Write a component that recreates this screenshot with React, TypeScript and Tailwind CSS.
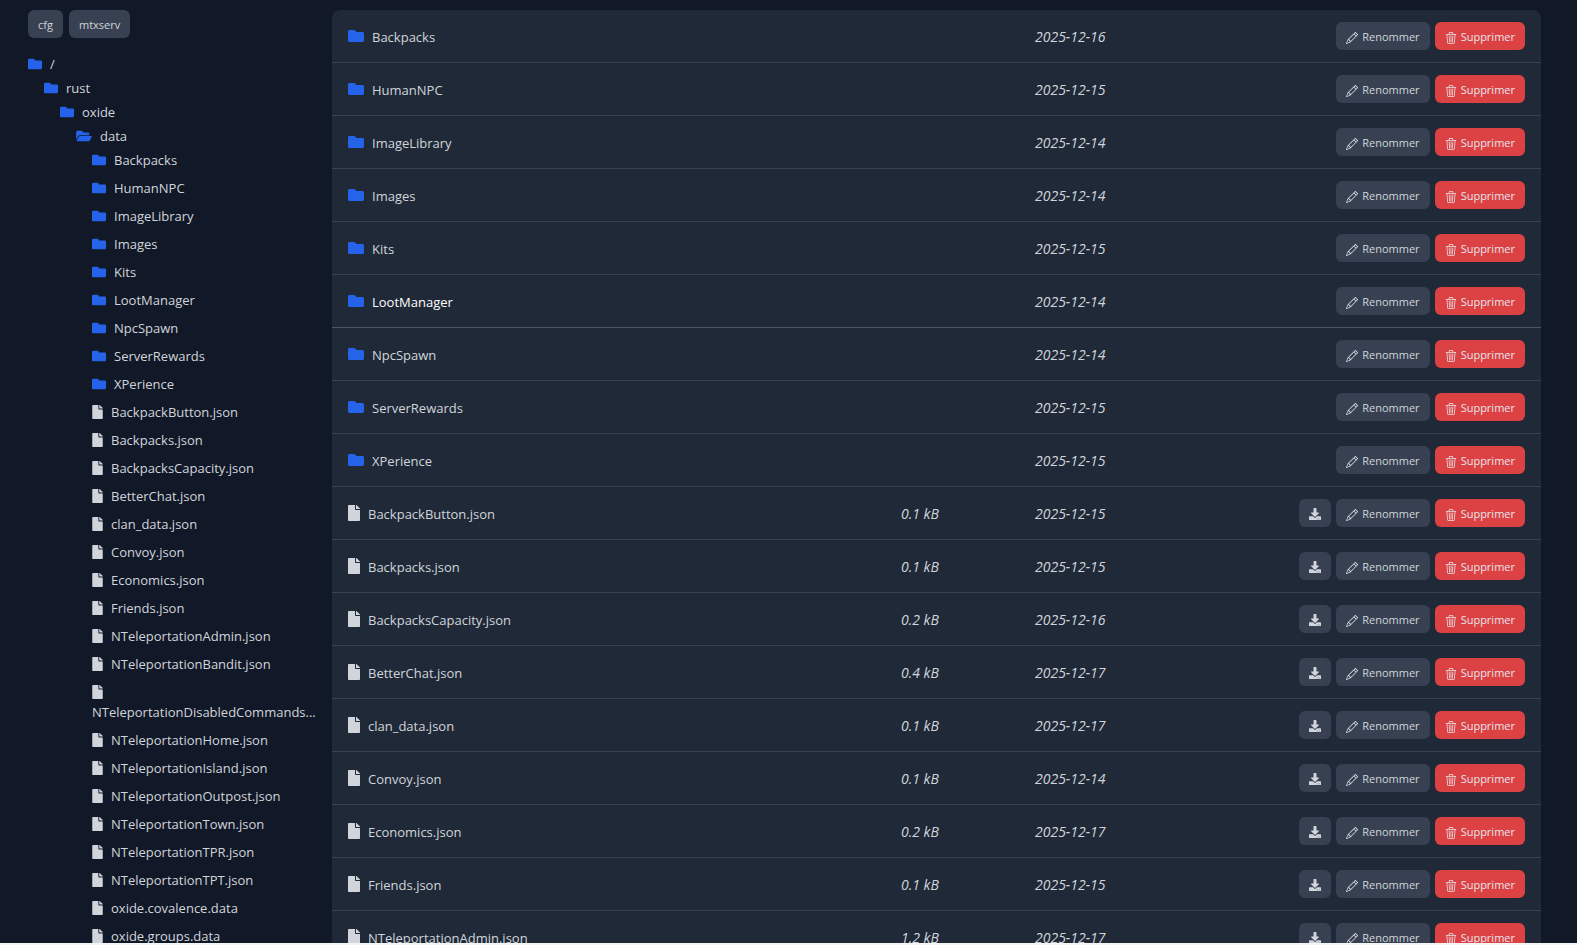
import { BsPencil, BsTrash3 } from "react-icons/bs";
import { FaDownload, FaFile, FaFolder, FaFolderOpen } from "react-icons/fa";

type Entry = {
  name: string;
  date: string;
  size?: string;
  active?: boolean;
};

const shortcuts = ["cfg", "mtxserv"];

const parents = [
  { name: "/", indent: "pl-0" },
  { name: "rust", indent: "pl-4" },
  { name: "oxide", indent: "pl-8" },
  { name: "data", indent: "pl-12", open: true },
];

const folders: Entry[] = [
  { name: "Backpacks", date: "2025-12-16" },
  { name: "HumanNPC", date: "2025-12-15" },
  { name: "ImageLibrary", date: "2025-12-14" },
  { name: "Images", date: "2025-12-14" },
  { name: "Kits", date: "2025-12-15" },
  { name: "LootManager", date: "2025-12-14", active: true },
  { name: "NpcSpawn", date: "2025-12-14" },
  { name: "ServerRewards", date: "2025-12-15" },
  { name: "XPerience", date: "2025-12-15" },
];

const files: Entry[] = [
  { name: "BackpackButton.json", size: "0.1 kB", date: "2025-12-15" },
  { name: "Backpacks.json", size: "0.1 kB", date: "2025-12-15" },
  { name: "BackpacksCapacity.json", size: "0.2 kB", date: "2025-12-16" },
  { name: "BetterChat.json", size: "0.4 kB", date: "2025-12-17" },
  { name: "clan_data.json", size: "0.1 kB", date: "2025-12-17" },
  { name: "Convoy.json", size: "0.1 kB", date: "2025-12-14" },
  { name: "Economics.json", size: "0.2 kB", date: "2025-12-17" },
  { name: "Friends.json", size: "0.1 kB", date: "2025-12-15" },
  { name: "NTeleportationAdmin.json", size: "1.2 kB", date: "2025-12-17" },
];

const treeFiles = [
  ...files.map((file) => file.name),
  "NTeleportationBandit.json",
  "NTeleportationDisabledCommands...",
  "NTeleportationHome.json",
  "NTeleportationIsland.json",
  "NTeleportationOutpost.json",
  "NTeleportationTown.json",
  "NTeleportationTPR.json",
  "NTeleportationTPT.json",
  "oxide.covalence.data",
  "oxide.groups.data",
];

const buttonBase =
  "inline-flex h-7 items-center gap-1 rounded-md px-[10px] pt-0.5 text-[11px]";
const grayButton = `${buttonBase} bg-[#374151] text-[#d1d5db]`;
const redButton = `${buttonBase} bg-[#dc4143] text-[#e5e7eb]`;

function Sidebar() {
  return (
    <aside className="w-[332px] shrink-0 pl-7 pt-[10px]">
      <div className="flex gap-[6px]">
        {shortcuts.map((name) => (
          <button key={name} type="button" className={grayButton}>
            {name}
          </button>
        ))}
      </div>
      <nav className="mt-[14px]">
        <ul>
          {parents.map((item) => (
            <li key={item.name} className={item.indent}>
              <a href="#" className="flex h-6 items-center gap-2">
                {item.open ? (
                  <FaFolderOpen className="h-[14px] w-4 text-[#2563eb]" />
                ) : (
                  <FaFolder className="size-[14px] text-[#2563eb]" />
                )}
                <span className="pt-0.5">{item.name}</span>
              </a>
            </li>
          ))}
        </ul>
        <ul className="pl-16">
          {folders.map((folder) => (
            <li key={folder.name} className="mb-1">
              <a href="#" className="flex h-6 items-center gap-2">
                <FaFolder className="size-[14px] text-[#2563eb]" />
                <span className="pt-0.5">{folder.name}</span>
              </a>
            </li>
          ))}
          {treeFiles.map((name) => (
            <li key={name} className="mb-1 pr-3">
              <a
                href="#"
                className="flex flex-wrap items-center gap-x-2 py-0.5 leading-5"
              >
                <FaFile className="my-[3px] h-[14px] w-[11px]" />
                <span>{name}</span>
              </a>
            </li>
          ))}
        </ul>
      </nav>
    </aside>
  );
}

function Row({ entry, folder }: { entry: Entry; folder?: boolean }) {
  return (
    <tr
      className={`h-[53px] *:border-b ${
        entry.active
          ? "text-white *:border-[#4b5563]"
          : "*:border-[#374151]"
      }`}
    >
      <td className="pl-4">
        <a href="#" className="flex items-center gap-2">
          {folder ? (
            <FaFolder className="size-4 text-[#2563eb]" />
          ) : (
            <FaFile className="h-4 w-3" />
          )}
          <span className="pt-[3px]">{entry.name}</span>
        </a>
      </td>
      <td className="w-[134px] pt-px text-[14px] text-[#d1d5db] italic">
        {entry.size}
      </td>
      <td className="w-[206px] pt-px text-[14px] text-[#d1d5db] italic">
        {entry.date}
      </td>
      <td className="w-[300px] pr-4">
        <div className="flex justify-end gap-[5px]">
          {!folder && (
            <button
              type="button"
              aria-label={`Télécharger ${entry.name}`}
              className={grayButton}
            >
              <FaDownload className="size-3" />
            </button>
          )}
          <button type="button" className={grayButton}>
            <BsPencil className="mt-0.5 size-3" />
            Renommer
          </button>
          <button type="button" className={redButton}>
            <BsTrash3 className="mt-0.5 size-3" />
            Supprimer
          </button>
        </div>
      </td>
    </tr>
  );
}

export default function App() {
  return (
    <div className="h-screen overflow-hidden border-b-2 border-[#f3f4f6] bg-[#111827] font-['Segoe_UI','Open_Sans',sans-serif] text-[13px] text-[#d1d5db]">
      <div className="flex items-start">
        <Sidebar />
        <main className="mt-[10px] mr-9 flex-1 overflow-hidden rounded-t-lg bg-[#1f2937]">
          <table className="w-full table-fixed border-separate border-spacing-0">
            <tbody>
              {folders.map((entry) => (
                <Row key={entry.name} entry={entry} folder />
              ))}
              {files.map((entry) => (
                <Row key={entry.name} entry={entry} />
              ))}
            </tbody>
          </table>
        </main>
      </div>
    </div>
  );
}
